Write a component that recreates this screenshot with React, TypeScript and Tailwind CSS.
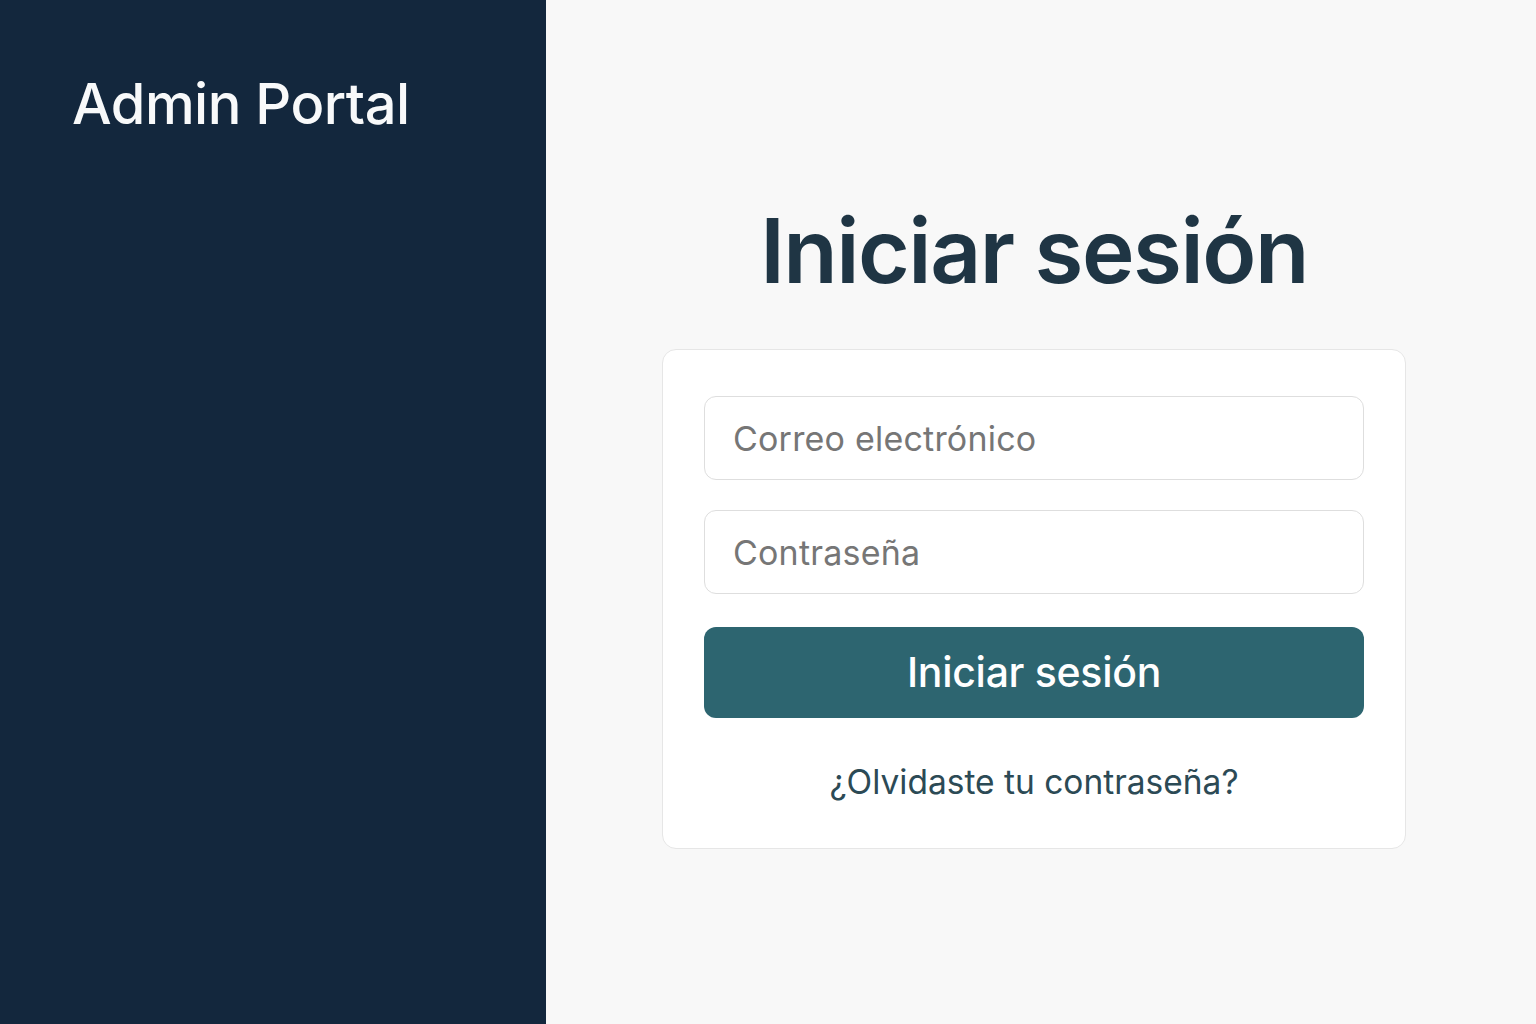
export default function App() {
  return (
    <div className="flex h-[1024px] w-full font-['Inter',sans-serif]">
      <aside className="w-[546px] shrink-0 bg-[#13273d] pl-[72px] pt-[72px]">
        <h1 className="text-[56px] leading-[64px] font-medium tracking-[-0.5px] text-[#f8f9fa]">Admin Portal</h1>
      </aside>
      <main className="flex flex-1 flex-col items-center bg-[#f8f8f8] pr-[14px] pt-[196px]">
        <h2 className="text-[89px] leading-[110px] font-semibold tracking-[-1.5px] text-[#1f3544]">Iniciar sesión</h2>
        <form className="mt-[43px] flex w-[744px] flex-col rounded-[14px] border border-[#e6e6e6] bg-white px-[41px] pt-[46px] pb-[44px]">
          <input
            type="email"
            placeholder="Correo electrónico"
            className="h-[84px] rounded-[12px] border border-[#dedede] bg-white px-[28px] text-[34px] tracking-[0.2px] text-[#333] placeholder:text-[#767676] focus:outline-none"
          />
          <input
            type="password"
            placeholder="Contraseña"
            className="mt-[30px] h-[84px] rounded-[12px] border border-[#dedede] bg-white px-[28px] text-[34px] tracking-[0.2px] text-[#333] placeholder:text-[#767676] focus:outline-none"
          />
          <button
            type="button"
            className="mt-[33px] h-[91px] rounded-[12px] bg-[#2d6570] text-[41px] font-medium tracking-[-0.3px] text-white"
          >
            Iniciar sesión
          </button>
          <a href="#" className="mt-[42px] text-center text-[33.5px] leading-[44px] text-[#2c4a55]">
            ¿Olvidaste tu contraseña?
          </a>
        </form>
      </main>
    </div>
  );
}
